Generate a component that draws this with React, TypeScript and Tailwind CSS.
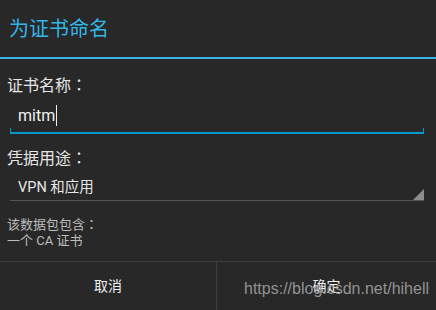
export default function App() {
  const cjk = { fontFamily: 'Roboto, "Noto Sans CJK SC", sans-serif' };
  const colon = { fontFamily: '"Noto Sans CJK TC", sans-serif' };
  return (
    <div className="relative w-[436px] h-[310px] bg-[#282828] overflow-hidden flex flex-col" style={cjk}>
      {/* title */}
      <div className="h-[57px] pl-[9px] flex items-center text-[20px] leading-[24px] text-[#33b5e5]">
        为证书命名
      </div>
      <div className="h-[2px] bg-[#33b5e5]" />

      {/* body */}
      <div className="flex flex-col">
        <div className="mt-[15px] pl-[7px] text-[16px] leading-[20px] text-[#e6e6e6]">
          证书名称<span style={colon}>：</span>
        </div>

        <div className="mt-[9px] pl-[18px] flex items-center text-[16px] leading-[20px] text-[#f0f0f0]">
          <span>mitm</span>
          <span className="ml-[1px] w-[1px] h-[21px] bg-[#f0f0f0]" />
        </div>
        <div className="mt-[2px] ml-[10px] mr-[12px] h-[6px] border-x border-b-2 border-[#0099cc] border-t-0" />

        <div className="mt-[13px] pl-[7px] text-[16px] leading-[20px] text-[#e6e6e6]">
          凭据用途<span style={colon}>：</span>
        </div>

        <div className="mt-[9px] ml-[10px] mr-[12px] flex items-end justify-between border-b border-[#555555]">
          <span className="pl-[8px] pb-[2px] text-[14.5px] leading-[20px] text-[#e6e6e6]">VPN 和应用</span>
          <svg width="11" height="11" viewBox="0 0 11 11" className="block">
            <polygon points="11,0 11,11 0,11" fill="#8c8c8c" />
          </svg>
        </div>

        <div className="mt-[15px] pl-[7px] text-[13px] leading-[16px] text-[#bdbdbd]">
          <div>
            该数据包包含<span style={colon}>：</span>
          </div>
          <div>一个 CA 证书</div>
        </div>
      </div>

      {/* buttons */}
      <div className="mt-auto border-t border-[#3d3d3d] h-[49px] flex">
        <div className="w-[216px] flex items-center justify-center text-[14px] text-[#eeeeee]">取消</div>
        <div className="w-[1px] bg-[#3d3d3d]" />
        <div className="flex-1 flex items-center justify-center text-[14px] text-[#eeeeee]">确定</div>
      </div>

      {/* watermark */}
      <div
        className="absolute left-[244px] top-[279px] text-[16px] leading-[20px] text-[#a0a0a0]/90"
        style={{ fontFamily: '"Liberation Sans", Arial, sans-serif' }}
      >
        https://blog.csdn.net/hihell
      </div>
    </div>
  );
}
